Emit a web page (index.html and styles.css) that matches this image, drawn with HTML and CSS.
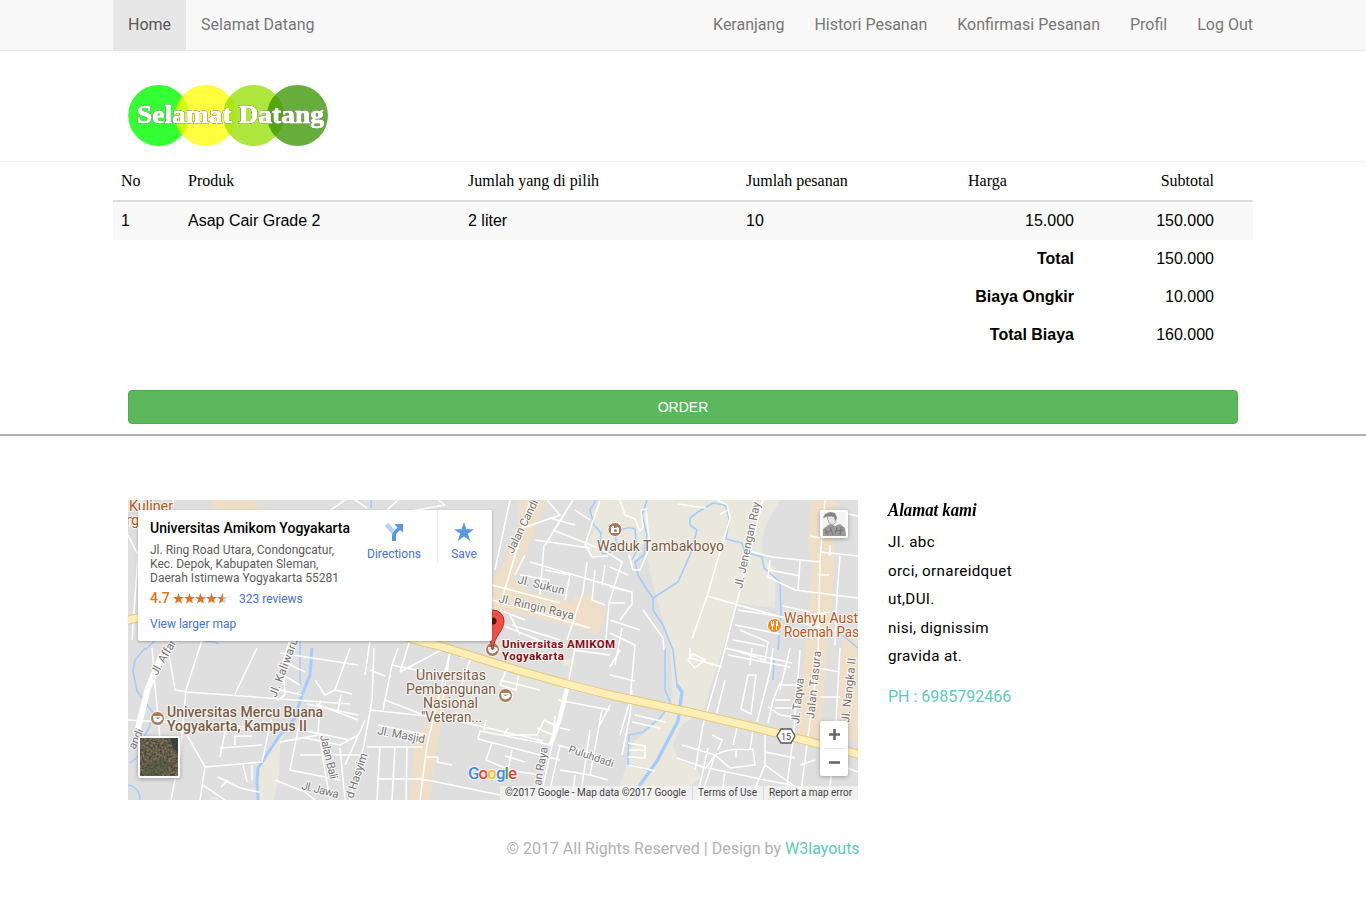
FILE: index.html
```html
<!DOCTYPE html>
<html lang="id">
<head>
<meta charset="utf-8">
<title>Selamat Datang</title>
<link rel="stylesheet" href="styles.css">
</head>
<body>
<nav class="navbar">
  <div class="container navbar-inner">
    <div class="nav-group"><a class="nav-link active">Home</a><a class="nav-link">Selamat Datang</a></div>
    <div class="nav-group"><a class="nav-link">Keranjang</a><a class="nav-link">Histori Pesanan</a><a class="nav-link">Konfirmasi Pesanan</a><a class="nav-link">Profil</a><a class="nav-link">Log Out</a></div>
  </div>
</nav>
<header class="brand">
  <div class="container brand-inner">
    <svg class="logo" width="200" height="62" viewBox="128 85 200 62">
      <circle cx="158.7" cy="115.5" r="30.5" fill="#33ff33"/>
      <circle cx="205.7" cy="115.5" r="30.5" fill="#ffff00" fill-opacity=".75"/>
      <circle cx="253.5" cy="115.5" r="30.5" fill="#94de00" fill-opacity=".76"/>
      <circle cx="297.5" cy="115.5" r="30.5" fill="#389400" fill-opacity=".77"/>
      <text class="logo-text" x="137" y="123" textLength="187" lengthAdjust="spacingAndGlyphs">Selamat Datang</text>
    </svg>
  </div>
</header>
<main class="container">
  <table class="cart">
    <colgroup><col class="c-no"><col class="c-produk"><col class="c-pilih"><col class="c-pesanan"><col class="c-harga"><col class="c-sub"><col></colgroup>
    <thead><tr><th>No</th><th>Produk</th><th>Jumlah yang di pilih</th><th>Jumlah pesanan</th><th>Harga</th><th class="num">Subtotal</th><th></th></tr></thead>
    <tbody>
      <tr class="item"><td>1</td><td>Asap Cair Grade 2</td><td>2 liter</td><td>10</td><td class="num">15.000</td><td class="num">150.000</td><td></td></tr>
      <tr><td colspan="5" class="num total">Total</td><td class="num">150.000</td><td></td></tr>
      <tr><td colspan="5" class="num total">Biaya Ongkir</td><td class="num">10.000</td><td></td></tr>
      <tr><td colspan="5" class="num total">Total Biaya</td><td class="num">160.000</td><td></td></tr>
    </tbody>
  </table>
  <div class="order-row"><button class="order">ORDER</button></div>
</main>
<footer class="footer">
  <div class="container footer-cols">
    <div class="map">
      <svg class="map-canvas" width="730" height="300" viewBox="128 500 730 300">
        <rect x="128" y="500" width="730" height="300" fill="#dfdfdf"/>
        <g fill="#eae8dc">
          <path d="M602 500H781L777 505 766 525 762 538V557L775 568V608L738 603 722 650 703 711 682 725 673 745 677 758 698 769 700 778 673 800H617L620 785 634 742 660 720 673 698 670 648 650 572 645 540 632 570 626 548 608 556 592 557 585 545 594 530 590 515Z"/>
          <path d="M288 720L280 745 279 775 274 800H258L257 781 259 768Z"/>
          <path d="M470 660L563 685 560 718 547 741 487 730 448 718 458 690Z" fill="#e3e4dd"/>
          <path d="M562 660L573 658 575 665 563 666ZM210 797H218V800H210Z"/>
        </g>
        <g fill="#f0dfc8">
          <path d="M517 500H547L529 545 513 582 530 592 572 603 575 595H592L605 612 598 635 567 625 530 616 492 608V580L503 565 520 520Z"/>
          <path d="M810 500H837L833 538 835 562 827 650 820 738 797 736 805 650 813 562 808 545Z"/>
          <path d="M844 630H858V740H837L840 660Z"/>
          <path d="M432 691H448L438 738 430 800H410L415 738 430 720Z"/>
          <path d="M213 500H257V508L275 510H212Z"/>
        </g>
        <g fill="none" stroke="#a3ccff" stroke-width="1.6" stroke-linejoin="round">
          <path d="M647 500L642 515 647 535 644 555 635 562 638 575 647 590 653 598 653 610 663 625 673 650 675 668 677 685"/>
          <path d="M653 598L678 582 690 555 697 530 690 525 690 518 698 512 713 503 725 505 729 518 726 539 742 543 745 552 762 557 764 568 780 582 781 613 778 650"/>
          <path d="M596 500L590 510 594 525 601 533 600 545 603 554 611 552"/><path d="M618 545C610 533 625 525 635 529L637 550 632 560"/>
          <path d="M665 648V690L671 704 660 718 643 732 629 735 628 764 651 771"/><path d="M774 660L773 680M371 500V508M197 640L219 643M300 685V640"/>
          <path d="M145 648L135 660 133 671 137 691 153 713 149 728 143 738 140 755 130 763M128 785C138 787 140 795 140 800"/>
          <path d="M145 650L160 636M836 630L858 648"/>
        </g>
        <g fill="none" stroke="#a3ccff" stroke-width="3.4" stroke-linejoin="round">
          <path d="M677 685L682 692 678 721 657 761 640 785 636 800" /><path d="M312 648L310 675 302 695 295 718 280 735 258 768 257 781 258 800" stroke-width="3"/>
        </g>
        <g fill="none" stroke="#fff" stroke-width="1.5" stroke-linejoin="round">
          <path d="M128 535L138 555M142 500L132 640M174 500L168 512M345 500L328 512M355 500L367 508M398 500L385 512M405 512L445 505 438 500"/>
          <path d="M168 648L175 690 187 692 350 704M155 685L152 648M202 640L186 690 180 755 171 800M257 648L235 694M155 685L162 760M187 735L205 767 200 800M205 767L262 762 271 720M220 757L225 732 270 725M220 748L262 745M235 745V736H252M243 765L247 782M252 765V780M218 777L240 788 259 792M228 780L221 787M203 785L225 800M350 740L262 722M128 720L250 727M320 700L318 735 280 742M316 704L358 720M307 704L358 715M350 648L335 690 325 695 315 680M335 690L352 694M341 695L338 710M320 735L323 760 330 800M300 720L290 770M275 780L305 792 315 800M290 770L340 780M300 755H365M305 738L340 745 358 735M340 748L345 800M365 720L345 765"/>
          <path d="M290 640L283 662 285 695 277 700M285 662L305 672M283 675L300 685M280 690L302 695M280 653L358 665"/>
          <path d="M374 648L372 700 364 745 350 800M383 710L392 665 440 675M370 670L385 676M392 665L398 648M400 672L445 648 450 652 443 680 427 745 420 800M370 710L445 718 543 741M385 700L424 715M367 747H423M380 747L377 800M395 747L392 800M407 747L406 800M377 779H422L500 795M425 757H438L437 762 452 765M427 735L378 725"/>
          <path d="M450 652L440 720M470 660L460 690M460 657L518 671M507 668L500 685 516 690 519 672M478 739L480 731 552 745M478 739L560 760M492 743L486 760 505 768M512 750L508 770 540 775M505 756L525 762M508 728L504 735 537 735 544 720 556 726M486 720L484 730M537 728L553 735 555 716"/>
          <path d="M495 570L510 500M503 595L520 540M492 585L560 603M505 590L530 500M492 600L590 628M517 530L560 515 547 500M535 540L590 548M553 530L603 550 622 562 609 603 605 650M530 562L625 590M544 545L540 595M573 500L545 545M545 570L570 575 565 600M520 575L550 580M525 555L515 575M587 562L583 592 567 640M595 570L592 600 605 605M605 565L602 585M550 518L575 525M590 520L575 510M600 500L585 545 592 557 608 556M500 610L525 620M510 615L520 635M512 625L560 640"/>
          <path d="M620 500L625 515 635 519 640 531 643 527 641 510 646 509 648 530 650 547 640 570 633 570 629 555M610 587L632 592V604L620 620M610 603H625M610 567L628 575M643 610L663 638 664 650M610 633L635 645 630 700 620 735M610 620L640 630M610 675L635 681M622 628L615 665M620 650L610 667M632 690L630 715 622 755M635 715L665 722M632 722L660 728M628 743L645 746V758L628 757M629 765L655 771M629 750H646"/>
          <path d="M692 639L707 596 730 518 727 505 718 500M678 504L706 508M720 514L728 510M707 596L738 605 858 638M740 590L722 660 703 725 695 770M763 500L740 590M738 610L790 618 830 612M735 625L780 634M733 640L765 646M745 550L772 557 820 562M770 560L768 577 795 590 858 598M800 561L798 590M770 570L800 576M783 606L810 612M810 536L820 538M825 500L820 560 818 660 805 760 800 800M820 552L858 556M840 556L837 595 835 645M818 575H829M822 615L812 640M830 545V556M830 510L858 516M725 648L792 663M728 655L790 667M752 648L750 665M740 630L768 642 765 660 734 650"/>
          <path d="M748 675H756L751 714 741 709ZM780 685H800M775 708H800M775 700H790M780 683L773 700 768 723M773 648L770 672 757 722M768 707L780 715 800 718M725 680L715 720M790 648L780 690M800 650L793 740 785 800M765 735L765 765 750 800M737 728L733 745M753 730L750 750M690 648V658L705 662 722 667M688 660L695 668 705 660 693 654ZM712 735L722 740 718 750M715 755C735 745 745 752 753 749L755 765 730 768 715 755ZM682 745L715 755 706 768 677 758M708 748L698 793M708 768L765 780 800 787M715 755L700 800M725 770L722 795M736 750V757M765 752L795 758M765 765L800 790M840 765L858 772M832 770L828 800M800 765L815 760M817 668L840 672M820 697H840M840 648L835 740"/>
          <path d="M567 690L575 648M573 650L610 655M558 700L610 710M602 710L590 775 560 770M558 745L600 757M560 728L570 730M590 730L580 800M552 745L540 800M560 745L550 790M610 705L600 725M575 775L572 800M590 775L608 780M540 690L500 680"/>
          <path d="M370 640L365 675M410 640L400 672M490 620L550 645"/>
        </g>
        <g fill="none" stroke="#fff" stroke-linecap="round" stroke-linejoin="round"><path d="M162 655L148 688 138 728" stroke-width="6"/><path d="M567 688L560 718 551 744" stroke-width="4.5"/></g>
        <g fill="none" stroke-linejoin="round"><path d="M120 622L145 616 340 618 423 642 440 646 517 670 563 683 610 695 693 713 757 728 858 754 870 757" stroke="#e7c978" stroke-width="9"/><path d="M120 622L145 616 340 618 423 642 440 646 517 670 563 683 610 695 693 713 757 728 858 754 870 757" stroke="#ffeeb5" stroke-width="7"/></g>
        <g class="road-name">
          <text transform="translate(513 554) rotate(-64)" textLength="58">Jalan Candi</text>
          <text x="517" y="583" transform="rotate(14 517 583)" textLength="48">Jl. Sukun</text>
          <text x="498" y="602" transform="rotate(13 498 602)" textLength="77">Jl. Ringin Raya</text>
          <text transform="translate(742 589) rotate(-78)" textLength="88">Jl. Jenengan Ray</text>
          <text transform="translate(157 676) rotate(-60)" textLength="50">Jl. Affandi</text>
          <text transform="translate(276 698) rotate(-69)" textLength="62">Jl. Kaliwaru</text>
          <text transform="translate(135 750) rotate(-66)" textLength="21">andi</text>
          <text x="377" y="734" transform="rotate(11 377 734)" textLength="48">Jl. Masjid</text>
          <text class="small" x="568" y="752" transform="rotate(19 568 752)" textLength="47">Puluhdadi</text>
          <text x="301" y="789" transform="rotate(14 301 789)" textLength="38">Jl. Jawa</text>
          <text transform="translate(320 736) rotate(77)" textLength="45">Jalan Bali</text>
          <text transform="translate(353 799) rotate(-72)" textLength="47">d Hasyim</text>
          <text transform="translate(541 786) rotate(-80)" textLength="39">an Raya</text>
          <text transform="translate(799 724) rotate(-84)" textLength="46">Jl. Taqwa</text>
          <text transform="translate(814 719) rotate(-84)" textLength="68">Jalan Tasura</text>
          <text transform="translate(849 723) rotate(-84)" textLength="65">Jl. Nangka II</text>
        </g>
        <g class="place">
          <text class="food" x="129" y="511" textLength="44" lengthAdjust="spacingAndGlyphs">Kuliner</text><text class="food" x="126" y="525" textLength="13">ng</text>
          <text x="597" y="551" textLength="127" lengthAdjust="spacingAndGlyphs">Waduk Tambakboyo</text>
          <text x="416" y="680" textLength="70" lengthAdjust="spacingAndGlyphs">Universitas</text><text x="406" y="694" textLength="90" lengthAdjust="spacingAndGlyphs">Pembangunan</text><text x="423" y="708" textLength="55" lengthAdjust="spacingAndGlyphs">Nasional</text><text x="421" y="722" textLength="61" lengthAdjust="spacingAndGlyphs">"Veteran...</text>
          <text class="strong" x="167" y="717" textLength="156" lengthAdjust="spacingAndGlyphs">Universitas Mercu Buana</text><text class="strong" x="167" y="731" textLength="140" lengthAdjust="spacingAndGlyphs">Yogyakarta, Kampus II</text>
          <text class="food" x="784" y="623" textLength="74" lengthAdjust="spacingAndGlyphs">Wahyu Aust</text><text class="food" x="784" y="637" textLength="75" lengthAdjust="spacingAndGlyphs">Roemah Pas</text>
        </g>
        <g stroke="#fff">
          <circle cx="615" cy="529.500" r="7" fill="#a77b5b"/><circle cx="505.500" cy="695.500" r="7" fill="#a77b5b"/><circle cx="157.500" cy="718.500" r="7" fill="#a77b5b"/><circle cx="492.500" cy="649.500" r="7" fill="#a77b5b"/><circle cx="774.500" cy="625.500" r="7" fill="#f58b1e"/>
        </g>
        <g fill="#fff">
          <path d="M611 527H612V526H614V528H616L617 527H618L619 528V533H611Z"/><circle cx="615.500" cy="530.500" r="1.500" fill="#a77b5b"/>
          <g id="cap"><path fill-rule="evenodd" d="M501 693H509L510.500 694.500V697H509.500L508.500 698.500 505.500 699.500 502.500 698.500 501.500 697ZM503 694.500L505.500 696 508.500 694.500Z"/></g>
          <use href="#cap" x="-348" y="23"/><use href="#cap" x="-13" y="-46"/>
          <path d="M771 621H772V624H773V621H774V625L773 626V630H772V626L771 625ZM776 621H778V626H777V630H776Z"/>
        </g>
        <path d="M492 649C491 636 482 631 482 621A11 11 0 0 1 504 621C504 631 494 636 493 649Z" fill="#f34e45" stroke="#b3312a"/><circle cx="493" cy="621" r="3.500" fill="#5c0f0b"/>
        <g class="amikom"><text x="502" y="648" textLength="113">Universitas AMIKOM</text><text x="502" y="660" textLength="62">Yogyakarta</text></g>
        <path d="M781 729H791L795 736 791 743H781L777 736Z" fill="#fff" stroke="#555" stroke-width="1.300"/><text class="shield" x="786" y="740">15</text>
        <text class="google" x="468" y="779" textLength="49"><tspan fill="#4285f4">G</tspan><tspan fill="#ea4335">o</tspan><tspan fill="#fbbc05">o</tspan><tspan fill="#4285f4">g</tspan><tspan fill="#34a853">l</tspan><tspan fill="#ea4335">e</tspan></text>
        <g class="legal"><rect x="500" y="786" width="358" height="14" fill="#f5f5f5" fill-opacity=".75"/><path d="M692.500 786V800M763.500 786V800" stroke="#d8d8d8"/><text x="505" y="796" textLength="181" lengthAdjust="spacingAndGlyphs">©2017 Google - Map data ©2017 Google</text><text x="698" y="796" textLength="59" lengthAdjust="spacingAndGlyphs">Terms of Use</text><text x="769" y="796" textLength="83" lengthAdjust="spacingAndGlyphs">Report a map error</text></g>
      </svg>
      <section class="place-card">
        <div class="place-desc">
          <h3 class="place-name">Universitas Amikom Yogyakarta</h3>
          <p class="place-address">Jl. Ring Road Utara, Condongcatur,<br>Kec. Depok, Kabupaten Sleman,<br>Daerah Istimewa Yogyakarta 55281</p>
          <div class="rating"><b class="score">4.7</b>
            <svg width="55" height="11" viewBox="0 0 55 11"><defs><path id="st" d="M5.500 0L6.900 3.900 11 4.100 7.800 6.600 8.900 10.500 5.500 8.200 2.100 10.500 3.200 6.600 0 4.100 4.100 3.900Z"/><clipPath id="half"><rect width="50" height="11"/></clipPath></defs><use href="#st" x="44" fill="#ccc"/><g fill="#e7711b" clip-path="url(#half)"><use href="#st"/><use href="#st" x="11"/><use href="#st" x="22"/><use href="#st" x="33"/><use href="#st" x="44"/></g></svg>
            <a class="map-link">323 reviews</a></div>
          <a class="map-link larger">View larger map</a>
        </div>
        <div class="action directions"><svg width="20" height="20" viewBox="0 0 20 20"><path d="M1 4L4 1 10 7 8 12Z" fill="#b5d1f5"/><path d="M8 19V13Q8 11 10 9L13.500 5.500 10.500 2H19V10.500L16 8 12 12V19Z" fill="#5797e8"/></svg><span>Directions</span></div>
        <div class="action save"><svg width="20" height="20" viewBox="0 0 20 20"><path d="M10 0L12.400 7.200H20L13.900 11.700 16.200 19 10 14.500 3.800 19 6.100 11.700 0 7.200H7.600Z" fill="#5797e8"/></svg><span>Save</span></div>
      </section>
      <svg class="avatar" width="28" height="28" viewBox="0 0 28 28"><rect width="28" height="28" rx="2" fill="#fff"/><rect x="2" y="2" width="24" height="24" fill="#f4f4f4"/><path d="M3 26V19L8 15 11 14 15 16 20 14 25 18 26 26Z" fill="#999"/><path d="M7 7L11 6 16 6V12L13 15 9 13Z" fill="#e4e4e4" stroke="#888" stroke-width=".6"/><path d="M3 8L5 4 10 2 15 3 17 8 15 11 14 7 9 6Z" fill="#858585"/><path d="M5 19L8 25M10 17L13 25M17 17L15 24M21 17L20 25M5 23L12 20M16 21L24 20" stroke="#666" stroke-width=".7"/></svg>
      <svg class="satellite" width="42" height="42" viewBox="0 0 42 42"><defs><filter id="terrain" x="0" y="0" width="100%" height="100%" color-interpolation-filters="sRGB"><feTurbulence type="fractalNoise" baseFrequency=".45" numOctaves="3" seed="4"/><feColorMatrix values=".4 0 0 0 .2 .4 0 0 0 .16 .35 0 0 0 .12 0 0 0 0 1"/></filter></defs><rect width="42" height="42" rx="2" fill="#fff"/><rect x="2" y="2" width="38" height="38" filter="url(#terrain)"/><path d="M6 31L14 27 24 23 31 28 27 35 19 39H8Z" fill="#3e5a38" fill-opacity=".4"/><path d="M32 2H40V18L35 12Z" fill="#183b38" fill-opacity=".65"/></svg>
      <svg class="zoom-control" width="28" height="55" viewBox="0 0 28 55"><rect width="28" height="55" rx="2" fill="#fff"/><path d="M4 27.500H24" stroke="#e6e6e6"/><path d="M9 13.500H20M14.500 8V19M9 41.500H20" stroke="#666" stroke-width="2.600"/></svg>
    </div>
    <address class="address">
      <h4 class="address-title"><span class="title-text">Alamat kami</span></h4>
      <p class="address-lines">Jl. abc<br>orci, ornareidquet<br>ut,DUI.<br>nisi, dignissim<br>gravida at.</p>
      <p class="phone">PH : 6985792466</p>
    </address>
  </div>
  <p class="copy">© 2017 All Rights Reserved | Design by <a class="copy-link">W3layouts</a></p>
</footer>
</body>
</html>
```
FILE: styles.css
```css
* { box-sizing: border-box; }
body { margin: 0; background: #fff; color: #000; font-family: Roboto, sans-serif; font-size: 16px; height: 924px; overflow: hidden; }
h3, h4, p { margin: 0; font-weight: 400; }
.container { width: 1140px; margin: 0 auto; }
.navbar { height: 51px; background: #f8f8f8; border-bottom: 1px solid #e7e7e7; }
.navbar-inner, .nav-group { display: flex; }
.navbar-inner { justify-content: space-between; }
.nav-link { padding: 15px; height: 50px; line-height: 20px; color: #777; white-space: nowrap; }
.nav-group:last-child { margin-right: -15px; }
.nav-link.active { background: #e7e7e7; color: #555; }
.brand { height: 111px; border-bottom: 1px solid #eee; }
.brand-inner { padding: 34px 15px 0; }
.logo { display: block; }
.logo-text { font: bold 25px "Liberation Serif", serif; fill: #fff; stroke: #fff; stroke-width: .9px; filter: drop-shadow(0 0 .7px #444) drop-shadow(0 0 .7px #555); }
.cart { width: 1140px; table-layout: fixed; border-collapse: separate; border-spacing: 0; font: 16px/22px "Liberation Sans", Arial, sans-serif; }
.cart th { height: 40px; padding: 8px; text-align: left; font: 16px/22px "Liberation Serif", "Times New Roman", serif; border-bottom: 2px solid #ddd; }
.cart td { height: 38px; padding: 8px; }
.cart .num { text-align: right; }
.total { font-weight: 700; }
.item { background: #f9f9f9; }
.c-no { width: 67px; } .c-produk { width: 280px; } .c-pilih { width: 278px; } .c-pesanan { width: 222px; } .c-harga { width: 122px; } .c-sub { width: 140px; }
.order-row { padding: 36px 15px 10px; }
.order { display: block; width: 100%; height: 34px; border: 1px solid #4cae4c; border-radius: 4px; background: #5cb85c; color: #fff; font: 14px/20px "Liberation Sans", Arial, sans-serif; }
.footer { border-top: 2px solid #b2b2b2; padding-top: 64px; }
.footer-cols { display: flex; gap: 30px; padding: 0 15px; }
.map { position: relative; width: 730px; height: 300px; overflow: hidden; }
.map-canvas { display: block; }
.map-canvas text { font-family: Roboto, sans-serif; paint-order: stroke; stroke: #fff; stroke-width: 2px; stroke-opacity: .75; }
.road-name text { font-size: 11.5px; fill: #747474; }
.road-name .small { font-size: 10.5px; }
.place text { font-size: 14px; fill: #7d5b42; }
.place .strong { font-weight: 500; }
.place .food { fill: #b3591d; }
.amikom text { font-size: 11.5px; font-weight: 700; fill: #8b0c12; }
.map-canvas .shield { font-size: 9px; text-anchor: middle; fill: #444; stroke: none; }
.map-canvas .google { font-size: 17px; font-weight: 500; }
.map-canvas .legal text { font-size: 10px; fill: #444; stroke: none; }
.place-card { position: absolute; left: 10px; top: 10px; width: 354px; height: 131px; display: flex; background: #fff; border-radius: 2px; box-shadow: 0 1px 3px rgba(0,0,0,.3); font-size: 12px; }
.place-desc { width: 213px; padding: 9px 0 0 12px; white-space: nowrap; }
.place-name { font-size: 14px; line-height: 18px; font-weight: 500; }
.place-address { margin-top: 6px; color: #5b5b5b; line-height: 14px; }
.rating { display: flex; align-items: center; height: 16px; margin-top: 5px; }
.score { width: 23px; font-size: 14px; font-weight: 500; color: #e7711b; }
.map-link { color: #4272db; }
.rating .map-link { margin: 1px 0 0 11px; }
.larger { display: block; margin-top: 11px; line-height: 14px; }
.action { display: flex; flex-direction: column; align-items: center; gap: 5px; padding-top: 12px; color: #4272db; line-height: 14px; }
.directions { width: 86px; height: 52px; }
.save { width: 53px; height: 52px; border-left: 1px solid #eee; }
.avatar, .satellite, .zoom-control { position: absolute; filter: drop-shadow(0 1px 2px rgba(0,0,0,.3)); }
.avatar { left: 692px; top: 10px; }
.satellite { left: 10px; top: 236px; }
.zoom-control { left: 692px; top: 221px; }
.address { font-style: normal; }
.address-title { height: 20px; font: italic bold 19px/19px "Liberation Serif", serif; white-space: nowrap; }
.title-text { display: inline-block; transform: scaleX(.88); transform-origin: left; }
.address-lines { margin-top: 8px; line-height: 28.5px; font-size: 15.2px; letter-spacing: .34px; }
.phone { margin-top: 13px; line-height: 26px; color: #5bcbbb; }
.copy { margin-top: 38px; text-align: center; line-height: 22px; color: #b2b2b2; }
.copy-link { color: #5bcbbb; }
```
